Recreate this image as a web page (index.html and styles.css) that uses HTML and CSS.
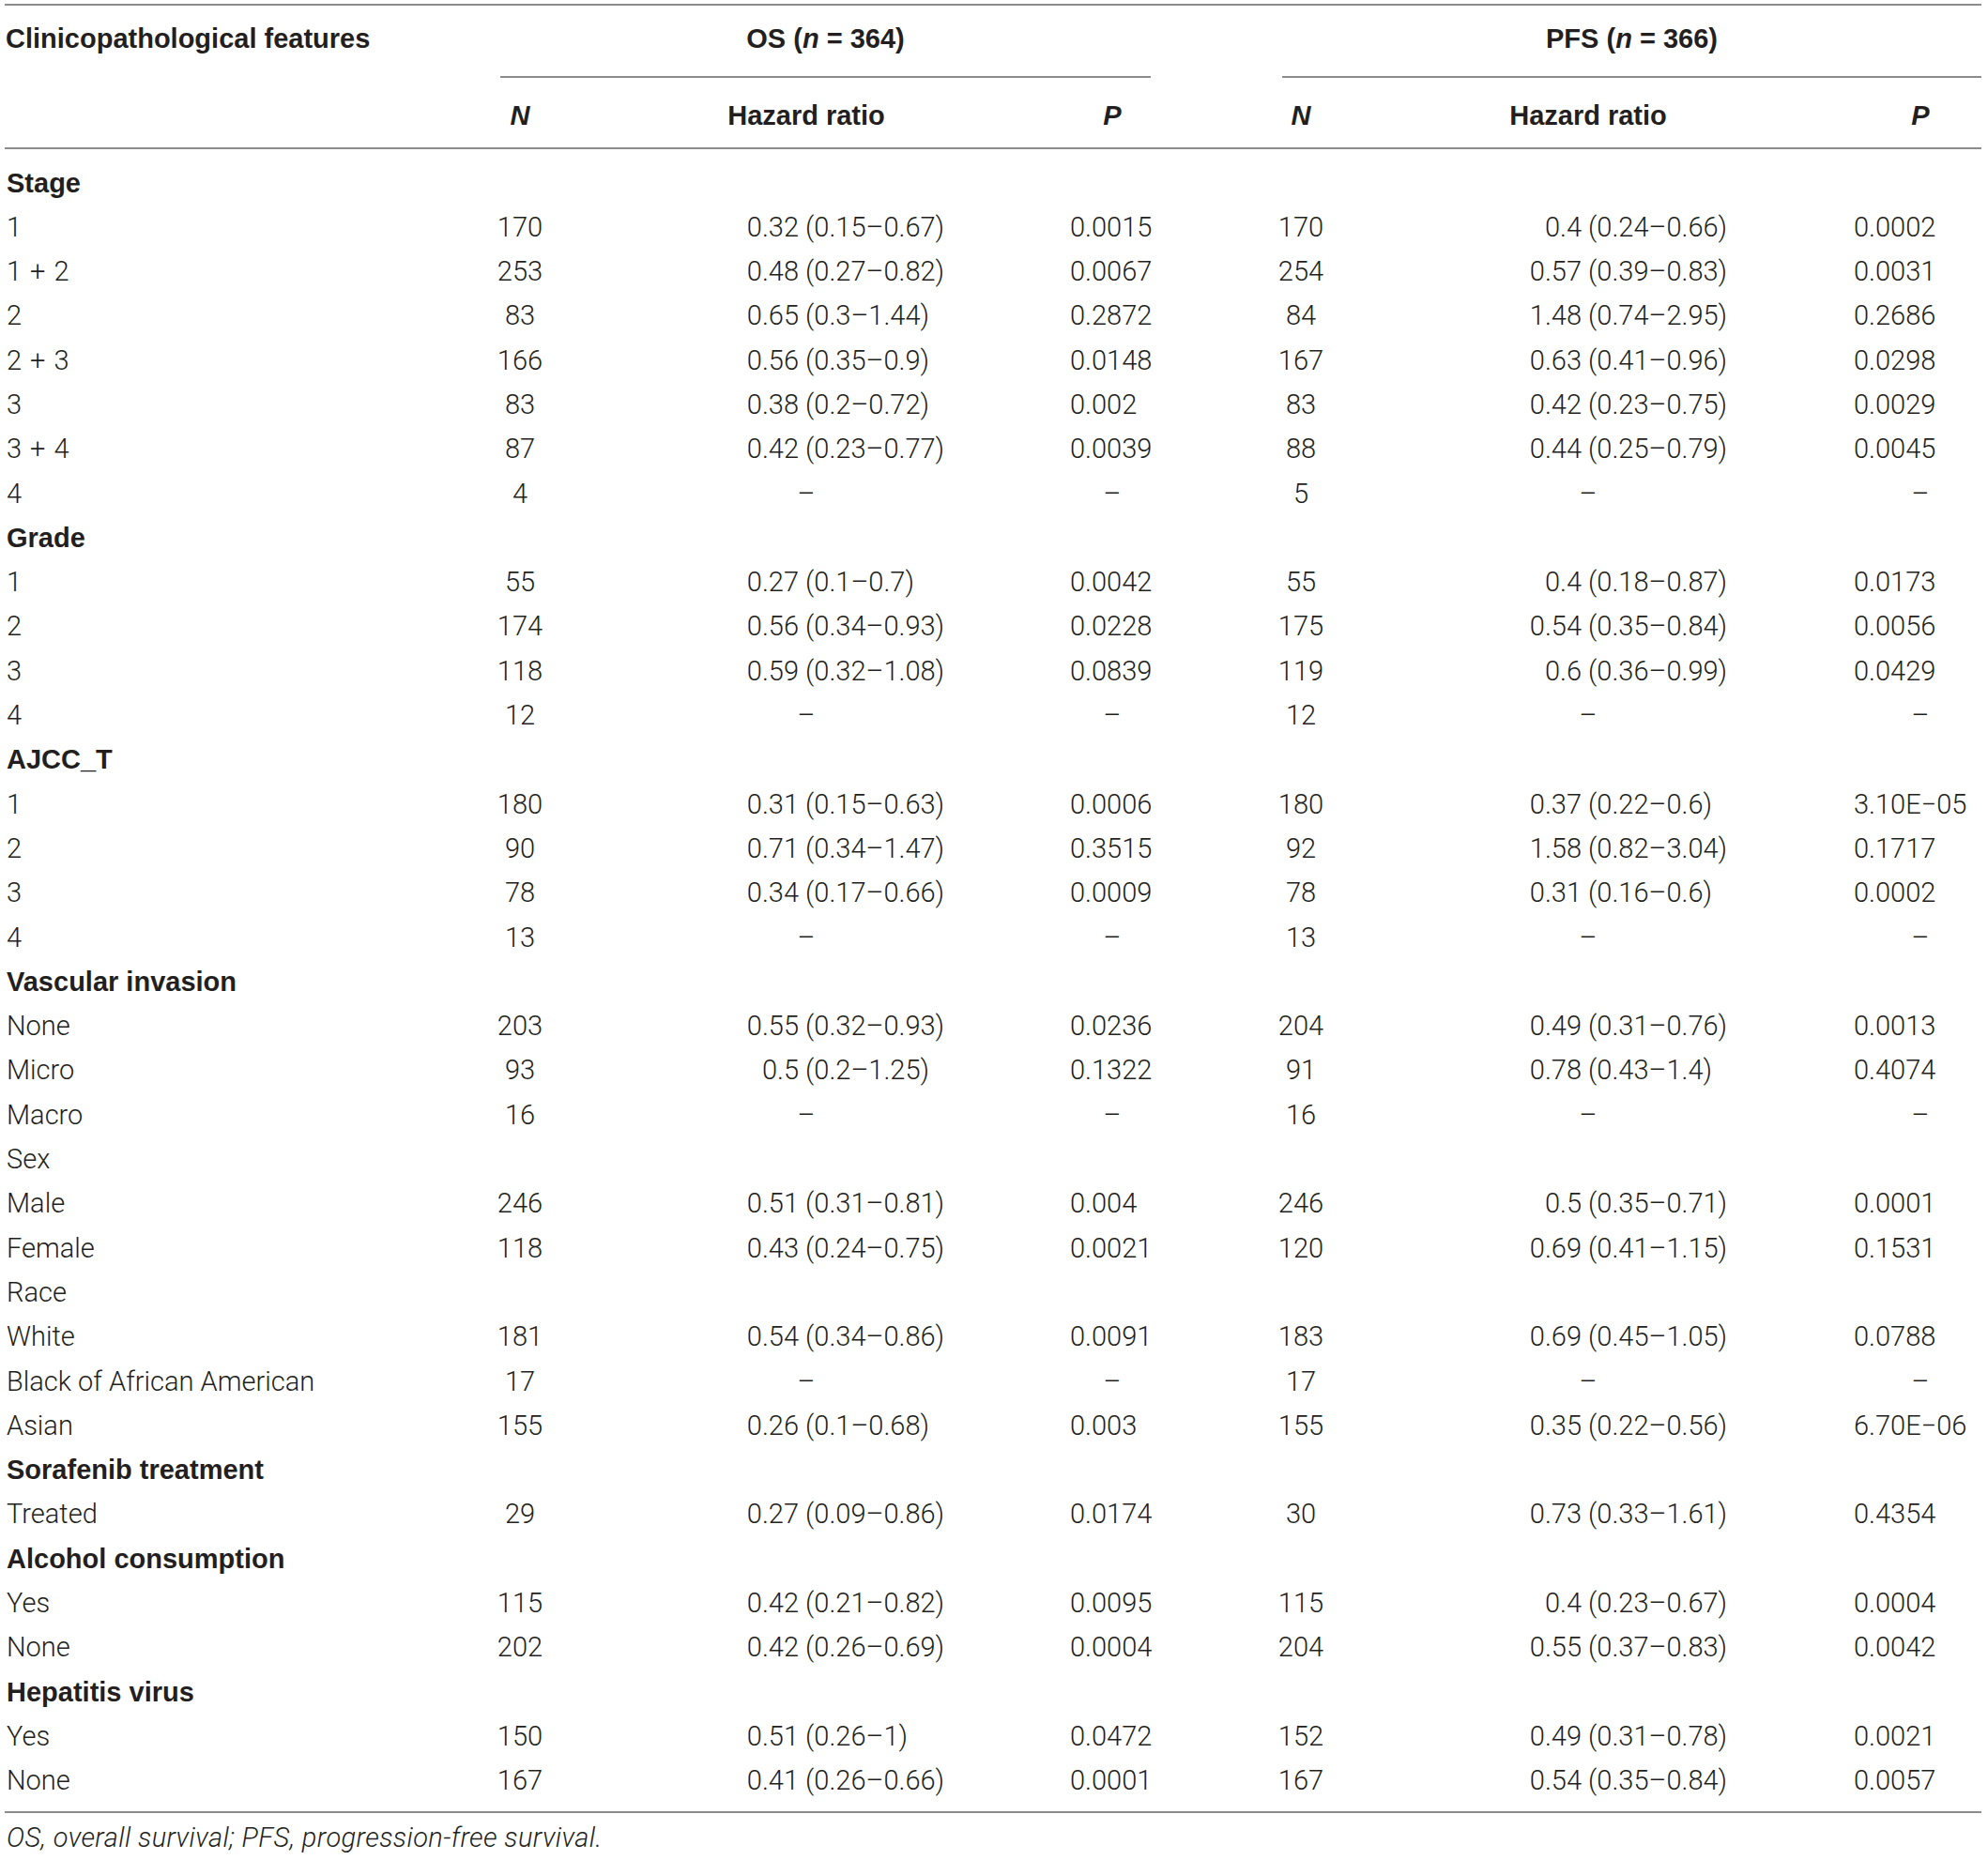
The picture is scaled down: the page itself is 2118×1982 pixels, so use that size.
FILE: index.html
```html
<!DOCTYPE html>
<html lang="en">
<head>
<meta charset="utf-8">
<title>Table</title>
<link rel="stylesheet" href="styles.css">
</head>
<body>
<div class="page">
<table class="tbl">
  <colgroup>
    <col class="c-feat">
    <col class="c-n1">
    <col class="c-hr1">
    <col class="c-p1">
    <col class="c-n2">
    <col class="c-hr2">
    <col class="c-p2">
  </colgroup>
  <thead>
    <tr class="hrow1">
      <th class="feat" rowspan="2">Clinicopathological features</th>
      <th class="grp os" colspan="3"><div class="grp-inner">OS (<i>n</i> = 364)</div></th>
      <th class="grp pfs" colspan="3"><div class="grp-inner">PFS (<i>n</i> = 366)</div></th>
    </tr>
    <tr class="hrow2">
      <th class="h"><i>N</i></th>
      <th class="h">Hazard ratio</th>
      <th class="h"><i>P</i></th>
      <th class="h"><i>N</i></th>
      <th class="h h-hr2">Hazard ratio</th>
      <th class="h h-p2"><i>P</i></th>
    </tr>
  </thead>
  <tbody>
    <tr><td class="f grp-l">Stage</td><td class="blank" colspan="6"></td></tr>
    <tr><td class="f">1</td><td class="n">170</td><td class="hr1"><span class="est">0.32</span> (0.15–0.67)</td><td class="p1">0.0015</td><td class="n">170</td><td class="hr2"><span class="est">0.4</span> (0.24–0.66)</td><td class="p2">0.0002</td></tr>
    <tr><td class="f">1<span class="op">+</span>2</td><td class="n">253</td><td class="hr1"><span class="est">0.48</span> (0.27–0.82)</td><td class="p1">0.0067</td><td class="n">254</td><td class="hr2"><span class="est">0.57</span> (0.39–0.83)</td><td class="p2">0.0031</td></tr>
    <tr><td class="f">2</td><td class="n">83</td><td class="hr1"><span class="est">0.65</span> (0.3–1.44)</td><td class="p1">0.2872</td><td class="n">84</td><td class="hr2"><span class="est">1.48</span> (0.74–2.95)</td><td class="p2">0.2686</td></tr>
    <tr><td class="f">2<span class="op">+</span>3</td><td class="n">166</td><td class="hr1"><span class="est">0.56</span> (0.35–0.9)</td><td class="p1">0.0148</td><td class="n">167</td><td class="hr2"><span class="est">0.63</span> (0.41–0.96)</td><td class="p2">0.0298</td></tr>
    <tr><td class="f">3</td><td class="n">83</td><td class="hr1"><span class="est">0.38</span> (0.2–0.72)</td><td class="p1">0.002</td><td class="n">83</td><td class="hr2"><span class="est">0.42</span> (0.23–0.75)</td><td class="p2">0.0029</td></tr>
    <tr><td class="f">3<span class="op">+</span>4</td><td class="n">87</td><td class="hr1"><span class="est">0.42</span> (0.23–0.77)</td><td class="p1">0.0039</td><td class="n">88</td><td class="hr2"><span class="est">0.44</span> (0.25–0.79)</td><td class="p2">0.0045</td></tr>
    <tr><td class="f">4</td><td class="n">4</td><td class="na">–</td><td class="na">–</td><td class="n">5</td><td class="na na-hr2">–</td><td class="na na-p2">–</td></tr>

    <tr><td class="f grp-l">Grade</td><td class="blank" colspan="6"></td></tr>
    <tr><td class="f">1</td><td class="n">55</td><td class="hr1"><span class="est">0.27</span> (0.1–0.7)</td><td class="p1">0.0042</td><td class="n">55</td><td class="hr2"><span class="est">0.4</span> (0.18–0.87)</td><td class="p2">0.0173</td></tr>
    <tr><td class="f">2</td><td class="n">174</td><td class="hr1"><span class="est">0.56</span> (0.34–0.93)</td><td class="p1">0.0228</td><td class="n">175</td><td class="hr2"><span class="est">0.54</span> (0.35–0.84)</td><td class="p2">0.0056</td></tr>
    <tr><td class="f">3</td><td class="n">118</td><td class="hr1"><span class="est">0.59</span> (0.32–1.08)</td><td class="p1">0.0839</td><td class="n">119</td><td class="hr2"><span class="est">0.6</span> (0.36–0.99)</td><td class="p2">0.0429</td></tr>
    <tr><td class="f">4</td><td class="n">12</td><td class="na">–</td><td class="na">–</td><td class="n">12</td><td class="na na-hr2">–</td><td class="na na-p2">–</td></tr>

    <tr><td class="f grp-l">AJCC_T</td><td class="blank" colspan="6"></td></tr>
    <tr><td class="f">1</td><td class="n">180</td><td class="hr1"><span class="est">0.31</span> (0.15–0.63)</td><td class="p1">0.0006</td><td class="n">180</td><td class="hr2"><span class="est">0.37</span> (0.22–0.6)</td><td class="p2">3.10E−05</td></tr>
    <tr><td class="f">2</td><td class="n">90</td><td class="hr1"><span class="est">0.71</span> (0.34–1.47)</td><td class="p1">0.3515</td><td class="n">92</td><td class="hr2"><span class="est">1.58</span> (0.82–3.04)</td><td class="p2">0.1717</td></tr>
    <tr><td class="f">3</td><td class="n">78</td><td class="hr1"><span class="est">0.34</span> (0.17–0.66)</td><td class="p1">0.0009</td><td class="n">78</td><td class="hr2"><span class="est">0.31</span> (0.16–0.6)</td><td class="p2">0.0002</td></tr>
    <tr><td class="f">4</td><td class="n">13</td><td class="na">–</td><td class="na">–</td><td class="n">13</td><td class="na na-hr2">–</td><td class="na na-p2">–</td></tr>

    <tr><td class="f grp-l">Vascular invasion</td><td class="blank" colspan="6"></td></tr>
    <tr><td class="f">None</td><td class="n">203</td><td class="hr1"><span class="est">0.55</span> (0.32–0.93)</td><td class="p1">0.0236</td><td class="n">204</td><td class="hr2"><span class="est">0.49</span> (0.31–0.76)</td><td class="p2">0.0013</td></tr>
    <tr><td class="f">Micro</td><td class="n">93</td><td class="hr1"><span class="est">0.5</span> (0.2–1.25)</td><td class="p1">0.1322</td><td class="n">91</td><td class="hr2"><span class="est">0.78</span> (0.43–1.4)</td><td class="p2">0.4074</td></tr>
    <tr><td class="f">Macro</td><td class="n">16</td><td class="na">–</td><td class="na">–</td><td class="n">16</td><td class="na na-hr2">–</td><td class="na na-p2">–</td></tr>

    <tr><td class="f">Sex</td><td class="blank" colspan="6"></td></tr>
    <tr><td class="f">Male</td><td class="n">246</td><td class="hr1"><span class="est">0.51</span> (0.31–0.81)</td><td class="p1">0.004</td><td class="n">246</td><td class="hr2"><span class="est">0.5</span> (0.35–0.71)</td><td class="p2">0.0001</td></tr>
    <tr><td class="f">Female</td><td class="n">118</td><td class="hr1"><span class="est">0.43</span> (0.24–0.75)</td><td class="p1">0.0021</td><td class="n">120</td><td class="hr2"><span class="est">0.69</span> (0.41–1.15)</td><td class="p2">0.1531</td></tr>

    <tr><td class="f">Race</td><td class="blank" colspan="6"></td></tr>
    <tr><td class="f">White</td><td class="n">181</td><td class="hr1"><span class="est">0.54</span> (0.34–0.86)</td><td class="p1">0.0091</td><td class="n">183</td><td class="hr2"><span class="est">0.69</span> (0.45–1.05)</td><td class="p2">0.0788</td></tr>
    <tr><td class="f">Black of African American</td><td class="n">17</td><td class="na">–</td><td class="na">–</td><td class="n">17</td><td class="na na-hr2">–</td><td class="na na-p2">–</td></tr>
    <tr><td class="f">Asian</td><td class="n">155</td><td class="hr1"><span class="est">0.26</span> (0.1–0.68)</td><td class="p1">0.003</td><td class="n">155</td><td class="hr2"><span class="est">0.35</span> (0.22–0.56)</td><td class="p2">6.70E−06</td></tr>

    <tr><td class="f grp-l">Sorafenib treatment</td><td class="blank" colspan="6"></td></tr>
    <tr><td class="f">Treated</td><td class="n">29</td><td class="hr1"><span class="est">0.27</span> (0.09–0.86)</td><td class="p1">0.0174</td><td class="n">30</td><td class="hr2"><span class="est">0.73</span> (0.33–1.61)</td><td class="p2">0.4354</td></tr>

    <tr><td class="f grp-l">Alcohol consumption</td><td class="blank" colspan="6"></td></tr>
    <tr><td class="f">Yes</td><td class="n">115</td><td class="hr1"><span class="est">0.42</span> (0.21–0.82)</td><td class="p1">0.0095</td><td class="n">115</td><td class="hr2"><span class="est">0.4</span> (0.23–0.67)</td><td class="p2">0.0004</td></tr>
    <tr><td class="f">None</td><td class="n">202</td><td class="hr1"><span class="est">0.42</span> (0.26–0.69)</td><td class="p1">0.0004</td><td class="n">204</td><td class="hr2"><span class="est">0.55</span> (0.37–0.83)</td><td class="p2">0.0042</td></tr>

    <tr><td class="f grp-l">Hepatitis virus</td><td class="blank" colspan="6"></td></tr>
    <tr><td class="f">Yes</td><td class="n">150</td><td class="hr1"><span class="est">0.51</span> (0.26–1)</td><td class="p1">0.0472</td><td class="n">152</td><td class="hr2"><span class="est">0.49</span> (0.31–0.78)</td><td class="p2">0.0021</td></tr>
    <tr><td class="f">None</td><td class="n">167</td><td class="hr1"><span class="est">0.41</span> (0.26–0.66)</td><td class="p1">0.0001</td><td class="n">167</td><td class="hr2"><span class="est">0.54</span> (0.35–0.84)</td><td class="p2">0.0057</td></tr>
  </tbody>
</table>
<p class="note">OS, overall survival; PFS, progression-free survival.</p>
</div>
</body>
</html>
```

FILE: styles.css
```css
html, body {
  margin: 0;
  padding: 0;
  background: #ffffff;
  overflow: hidden;
}

body {
  color: #231f20;
  font-family: Roboto, "Liberation Sans", Arial, sans-serif;
  font-weight: 300;
  font-size: 29px;
}

.page {
  padding: 4px 0 0 5px;
}

.tbl {
  width: 2106px;
  table-layout: fixed;
  border-collapse: separate;
  border-spacing: 0;
  border-top: 2px solid #8c8c8c;
  border-bottom: 2px solid #8c8c8c;
}

.c-feat { width: 475px; }
.c-n1 { width: 148px; }
.c-hr1 { width: 462px; }
.c-p1 { width: 190px; }
.c-n2 { width: 212px; }
.c-hr2 { width: 400px; }
.c-p2 { width: 219px; }

/* header */
.tbl th {
  font-family: "Liberation Sans", Arial, sans-serif;
  font-weight: 700;
  font-size: 29px;
  padding: 0;
  white-space: nowrap;
}

.tbl th i {
  font-style: italic;
}

.tbl th.feat {
  text-align: left;
  vertical-align: top;
  line-height: 70px;
  padding-left: 1px;
  border-bottom: 2px solid #8c8c8c;
}

.grp {
  vertical-align: top;
}

.grp-inner {
  line-height: 70px;
  padding-bottom: 5px;
  border-bottom: 2px solid #8c8c8c;
  text-align: center;
}

.os .grp-inner {
  margin: 0 54px 0 53px;
}

.pfs .grp-inner {
  margin: 0 0 0 86px;
}

.tbl th.h {
  padding-top: 6px;
  line-height: 68px;
  border-bottom: 2px solid #8c8c8c;
  text-align: center;
}

.tbl th.h-p2 {
  padding-left: 89px;
}

/* body */
.tbl td {
  padding: 0;
  line-height: 47.3px;
  white-space: nowrap;
  vertical-align: middle;
}

.tbl tbody tr:first-child td {
  padding-top: 12.5px;
}

.tbl tbody tr:last-child td {
  padding-bottom: 8.3px;
}

.tbl td.f {
  text-align: left;
  padding-left: 2px;
}

.op {
  margin: 0 9px;
}

.tbl td.grp-l {
  font-family: "Liberation Sans", Arial, sans-serif;
  font-weight: 700;
}

.tbl td.n {
  text-align: center;
}

.tbl td.hr1 {
  text-align: left;
  padding-left: 166px;
}

.tbl td.hr2 {
  text-align: left;
  padding-left: 136px;
}

.est {
  display: inline-block;
  width: 57px;
  text-align: right;
}

.tbl td.p1 {
  text-align: left;
  padding-left: 50px;
}

.tbl td.p2 {
  text-align: left;
  padding-left: 83px;
}

.tbl td.na {
  text-align: center;
}

.tbl td.na-p2 {
  padding-left: 89px;
}

.note {
  margin: 0;
  padding: 3px 0 0 2px;
  line-height: 46px;
  font-style: italic;
  letter-spacing: 0.4px;
}
```
